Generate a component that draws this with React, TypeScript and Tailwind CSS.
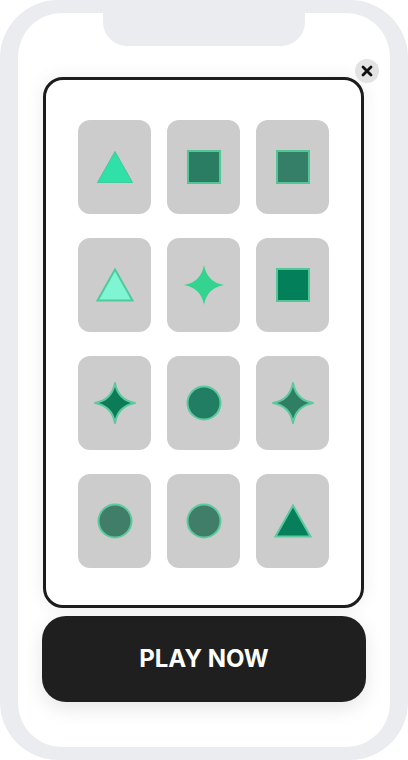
import React from "react";

type Shape = { kind: "tri" | "sq" | "star" | "circ"; fill: string; stroke: string; sw?: number };

const shapes: Shape[] = [
  { kind: "tri", fill: "#2fe0a8", stroke: "#3fcb9c", sw: 1 },
  { kind: "sq", fill: "#2a7d62", stroke: "#52c697", sw: 2 },
  { kind: "sq", fill: "#357f68", stroke: "#52c697", sw: 2 },
  { kind: "tri", fill: "#7ff5d3", stroke: "#4ccb9c", sw: 2 },
  { kind: "star", fill: "#34d490", stroke: "#34d490", sw: 0 },
  { kind: "sq", fill: "#03805a", stroke: "#52c697", sw: 2 },
  { kind: "star", fill: "#0b7b58", stroke: "#5cc99f", sw: 2 },
  { kind: "circ", fill: "#217e62", stroke: "#5ccaa0", sw: 2 },
  { kind: "star", fill: "#2e7f64", stroke: "#5cc99f", sw: 2 },
  { kind: "circ", fill: "#417e6a", stroke: "#5cc99f", sw: 2 },
  { kind: "circ", fill: "#417e6a", stroke: "#5cc99f", sw: 2 },
  { kind: "tri", fill: "#077f5a", stroke: "#5cc99f", sw: 2 },
];

function ShapeIcon({ s }: { s: Shape }) {
  const sw = s.sw ?? 0;
  return (
    <svg width="44" height="44" viewBox="0 0 44 44">
      {s.kind === "tri" && (
        <polygon points="22,6.5 39.5,37.5 4.5,37.5" fill={s.fill} stroke={s.stroke} strokeWidth={sw} strokeLinejoin="miter" />
      )}
      {s.kind === "sq" && (
        <rect x="6" y="6" width="32" height="32" fill={s.fill} stroke={s.stroke} strokeWidth={sw} />
      )}
      {s.kind === "circ" && <circle cx="22" cy="22" r="16.5" fill={s.fill} stroke={s.stroke} strokeWidth={sw} />}
      {s.kind === "star" && (
        <path
          d="M22 2 Q25 19 42 22 Q25 25 22 42 Q19 25 2 22 Q19 19 22 2 Z"
          fill={s.fill}
          stroke={s.stroke}
          strokeWidth={sw}
          strokeLinejoin="round"
        />
      )}
    </svg>
  );
}

export default function App() {
  return (
    <div className="w-[408px] h-[760px] bg-white" style={{ fontFamily: "Inter, 'Noto Sans', sans-serif" }}>
      <div className="w-full h-full rounded-[58px] bg-[#ebecf0] px-[18px] pt-[13px] pb-[13px]">
        <div className="w-full h-full bg-white rounded-[44px] flex flex-col">
          <div className="mx-auto w-[202px] h-[33px] bg-[#ebecf0] rounded-b-[24px]" />
          <div className="relative mt-[31px] ml-[25px] w-[321px] h-[531px]">
            <div className="w-full h-full rounded-[20px] border-[3px] border-[#1c1c1c] bg-white shadow-[0_0_18px_rgba(0,0,0,0.08)] flex items-center justify-center pt-[3px]">
              <div className="grid grid-cols-[73px_73px_73px] gap-x-[16px] gap-y-[24px]">
                {shapes.map((s, i) => (
                  <div key={i} className="w-[73px] h-[94px] rounded-[12px] bg-[#cccccc] flex items-center justify-center">
                    <ShapeIcon s={s} />
                  </div>
                ))}
              </div>
            </div>
            <div className="absolute top-[-18px] right-[-15px] w-[24px] h-[24px] rounded-full bg-[#e3e3e3] flex items-center justify-center">
              <svg width="12" height="12" viewBox="0 0 12 12">
                <path d="M2 2 L10 10 M10 2 L2 10" stroke="#111" strokeWidth="2.8" strokeLinecap="round" />
              </svg>
            </div>
          </div>
          <button className="mt-[8px] ml-[24px] w-[324px] h-[86px] rounded-[24px] bg-[#1e1f1e] text-white font-bold text-[24px] shadow-[0_6px_20px_rgba(0,0,0,0.10)] flex items-center justify-center">
            PLAY NOW
          </button>
        </div>
      </div>
    </div>
  );
}
